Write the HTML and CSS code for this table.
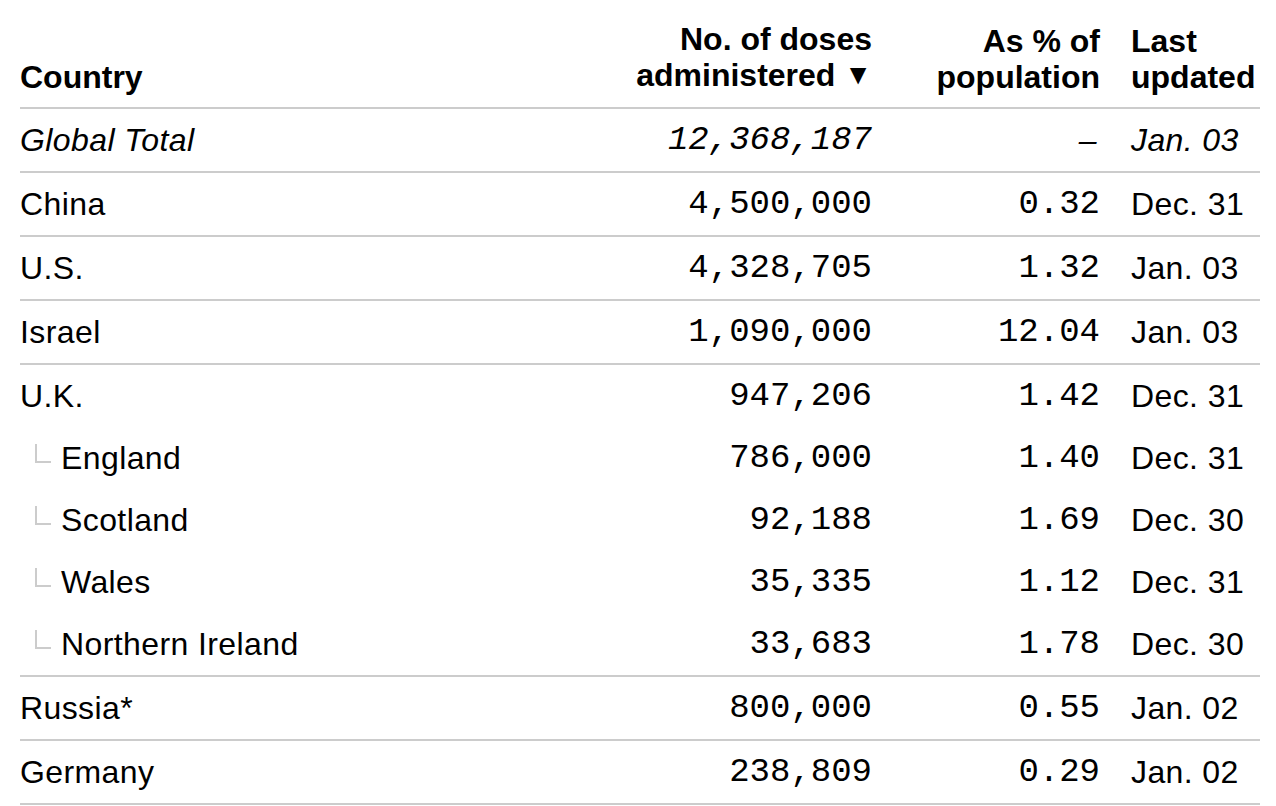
FILE: index.html
```html
<!DOCTYPE html>
<html lang="en">
<head>
<meta charset="utf-8">
<title>Vaccination campaign</title>
<link rel="stylesheet" href="styles.css">
</head>
<body>
<main class="page">
  <table class="doses">
    <colgroup>
      <col class="c-country">
      <col class="c-doses">
      <col class="c-pct">
      <col class="c-date">
    </colgroup>
    <thead>
      <tr>
        <th class="country">Country</th>
        <th class="num">No. of doses<br>administered <span class="sort">▼</span></th>
        <th class="num">As % of<br>population</th>
        <th class="date">Last<br>updated</th>
      </tr>
    </thead>
    <tbody>
      <tr class="main total">
        <td class="country">Global Total</td>
        <td class="num mono">12,368,187</td>
        <td class="num dash">–</td>
        <td class="date">Jan. 03</td>
      </tr>
      <tr class="main">
        <td class="country">China</td>
        <td class="num mono">4,500,000</td>
        <td class="num mono">0.32</td>
        <td class="date">Dec. 31</td>
      </tr>
      <tr class="main">
        <td class="country">U.S.</td>
        <td class="num mono">4,328,705</td>
        <td class="num mono">1.32</td>
        <td class="date">Jan. 03</td>
      </tr>
      <tr class="main">
        <td class="country">Israel</td>
        <td class="num mono">1,090,000</td>
        <td class="num mono">12.04</td>
        <td class="date">Jan. 03</td>
      </tr>
      <tr class="main">
        <td class="country">U.K.</td>
        <td class="num mono">947,206</td>
        <td class="num mono">1.42</td>
        <td class="date">Dec. 31</td>
      </tr>
      <tr class="sub">
        <td class="country"><span class="branch"></span>England</td>
        <td class="num mono">786,000</td>
        <td class="num mono">1.40</td>
        <td class="date">Dec. 31</td>
      </tr>
      <tr class="sub">
        <td class="country"><span class="branch"></span>Scotland</td>
        <td class="num mono">92,188</td>
        <td class="num mono">1.69</td>
        <td class="date">Dec. 30</td>
      </tr>
      <tr class="sub">
        <td class="country"><span class="branch"></span>Wales</td>
        <td class="num mono">35,335</td>
        <td class="num mono">1.12</td>
        <td class="date">Dec. 31</td>
      </tr>
      <tr class="sub">
        <td class="country"><span class="branch"></span>Northern Ireland</td>
        <td class="num mono">33,683</td>
        <td class="num mono">1.78</td>
        <td class="date">Dec. 30</td>
      </tr>
      <tr class="main">
        <td class="country">Russia*</td>
        <td class="num mono">800,000</td>
        <td class="num mono">0.55</td>
        <td class="date">Jan. 02</td>
      </tr>
      <tr class="main last">
        <td class="country">Germany</td>
        <td class="num mono">238,809</td>
        <td class="num mono">0.29</td>
        <td class="date">Jan. 02</td>
      </tr>
    </tbody>
  </table>
</main>
</body>
</html>
```

FILE: styles.css
```css
* {
  box-sizing: border-box;
}

html, body {
  margin: 0;
  padding: 0;
  background: #ffffff;
}

body {
  font-family: "Liberation Sans", Arial, Helvetica, sans-serif;
  color: #000000;
}

.page {
  padding: 0 16px 0 20px;
}

.doses {
  width: 1240px;
  border-collapse: collapse;
  table-layout: fixed;
  font-size: 32px;
  letter-spacing: 0.4px;
}

.c-country { width: 560px; }
.c-doses { width: 292px; }
.c-pct { width: 228px; }
.c-date { width: 160px; }

.doses th {
  font-weight: 700;
  line-height: 36px;
  vertical-align: bottom;
  padding: 21px 0 12px 0;
  border-bottom: 2px solid #cccccc;
  text-align: left;
  white-space: nowrap;
  letter-spacing: 0;
}

.doses th.num {
  text-align: right;
}

.doses th.date {
  padding-left: 31px;
}

.sort {
  font-size: 28px;
  display: inline-block;
  position: relative;
  top: -2px;
}

.doses td {
  line-height: 36px;
  padding: 13px 0;
  white-space: nowrap;
  vertical-align: middle;
}

.doses tr.main + tr.main td,
.doses tr.sub + tr.main td {
  border-top: 2px solid #cccccc;
}

.doses tr.last td {
  border-bottom: 2px solid #cccccc;
}

.doses td.num {
  text-align: right;
}

.doses td.date {
  padding-left: 31px;
}

.mono {
  font-family: "Liberation Mono", "Courier New", monospace;
  font-size: 34px;
  letter-spacing: 0;
}

.total td {
  font-style: italic;
}

.dash {
  padding-right: 3px !important;
}

.doses tr.sub td.country {
  padding-left: 15px;
}

.branch {
  display: inline-block;
  width: 16px;
  height: 19px;
  border-left: 2px solid #cccccc;
  border-bottom: 2px solid #cccccc;
  margin-right: 10px;
  vertical-align: 6px;
}
```
